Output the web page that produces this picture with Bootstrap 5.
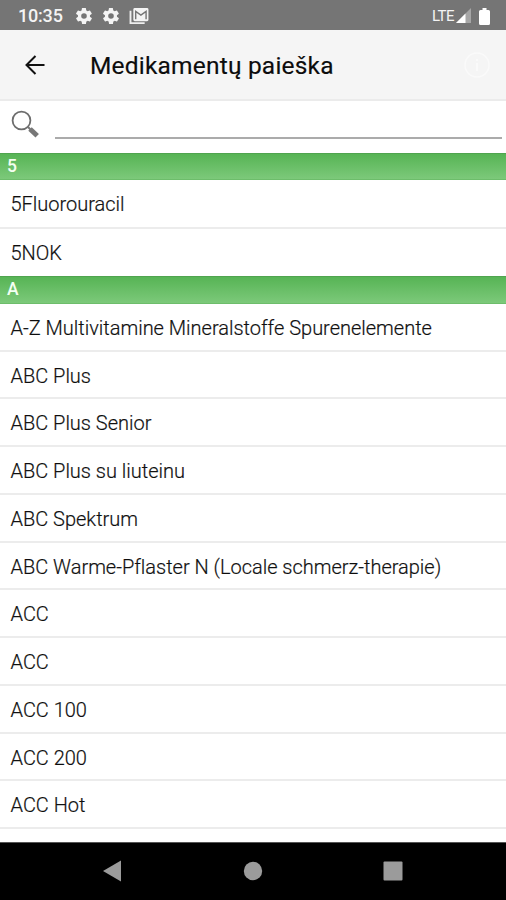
<!DOCTYPE html>
<html lang="lt">
<head>
<meta charset="utf-8">
<meta name="viewport" content="width=device-width, initial-scale=1">
<title>Medikamentų paieška</title>
<link href="https://cdn.jsdelivr.net/npm/bootstrap@5.3.0/dist/css/bootstrap.min.css" rel="stylesheet">
<style>
body{font-family:Roboto,"Noto Sans",sans-serif;color:#0c0c0c;background:#fff}
.screen{height:900px}
svg{display:block;flex:none}
.status-bar{height:30px;background:#757575;color:#f4f4f4;padding:2px 16px 0 18px}
.clock{font-size:18px;font-weight:500;width:58px;letter-spacing:-.2px;line-height:1}
.lte{font-size:15px;letter-spacing:-.5px;line-height:1;margin-right:2px}
.app-bar{height:71px;background:#f5f5f5;border-bottom:2px solid #ebebeb;padding:0 15px 0 21px}
.app-title{font-size:24.5px;font-weight:400;line-height:1;margin-left:41px;padding-top:3px;letter-spacing:.2px;-webkit-text-stroke:.15px #0c0c0c}
.search-bar{height:52px;padding:0 4px 0 10px}
.search-input{height:38px;margin-left:14px;border:0;border-bottom:2px solid #ababab;border-radius:0;padding:0;background:none}
.section-head{height:27.4px;background:linear-gradient(#57b455,#7cc97a);border-top:1px solid #50a44f;border-bottom:1px solid #6dbd6b;color:#f4fff2;font-size:17.5px;font-weight:500;line-height:25px;padding-left:7px}
.med-row{height:47.77px;font-size:20px;font-weight:300;line-height:47px;padding:1px 10.5px 0;border-bottom:2px solid #ececec;white-space:nowrap;letter-spacing:-.01px;-webkit-text-stroke:.2px #222}
.med-row.tall-row{height:48.2px}
.nav-keys{height:58px;background:#000;border-top:1px solid #555;padding:0 103px 2px 102px}
</style>
</head>
<body>
<div class="screen d-flex flex-column overflow-hidden">
  <header class="status-bar d-flex align-items-center flex-shrink-0">
    <span class="clock">10:35</span>
    <svg width="16" height="16" viewBox="2 2 20 20" fill="#f4f4f4"><path id="gear" d="M19.4 13a7.800 7.800 0 0 0 0-2l2.100-1.600a.5.5 0 0 0 .1-.7l-2-3.400a.5.5 0 0 0-.6-.2l-2.500 1a7.300 7.300 0 0 0-1.700-1l-.4-2.700a.5.5 0 0 0-.5-.4h-4a.5.5 0 0 0-.5.4L9 5.100a7.300 7.300 0 0 0-1.700 1l-2.500-1a.5.5 0 0 0-.6.200l-2 3.400a.5.5 0 0 0 .1.700L4.500 11a7.800 7.800 0 0 0 0 2l-2.100 1.600a.5.5 0 0 0-.1.700l2 3.400a.5.5 0 0 0 .6.200l2.500-1a7.300 7.300 0 0 0 1.700 1l.4 2.700a.5.5 0 0 0 .5.400h4a.5.5 0 0 0 .5-.4l.4-2.700a7.300 7.300 0 0 0 1.700-1l2.500 1a.5.5 0 0 0 .6-.2l2-3.400a.5.5 0 0 0-.1-.7zM12 15.500a3.500 3.500 0 1 1 0-7 3.500 3.500 0 0 1 0 7z"/></svg>
    <svg width="16" height="16" viewBox="2 2 20 20" fill="#f4f4f4" style="margin-left:11px"><use href="#gear"/></svg>
    <svg width="20" height="17" viewBox="0 0 20 18" style="margin-left:10px"><path d="M1 3v13h15" fill="none" stroke="#eee" stroke-width="2"/><rect x="4" y="0" width="16" height="14" rx="1.500" fill="#f4f4f4"/><path d="M6.500 12V3.500l5.500 4 5.500-4V12" fill="none" stroke="#757575" stroke-width="1.500"/></svg>
    <span class="lte ms-auto">LTE</span>
    <svg width="15" height="16" viewBox="0 0 15 16"><path d="M0 15 15 0v15z" fill="#a6a6a6"/><path d="M0 15 9.500 5.500V15z" fill="#fff"/></svg>
    <svg width="11" height="17" viewBox="0 0 11 17" fill="#fff" style="margin-left:8px"><path d="M3.500 0h4v2H9.500a1.500 1.500 0 0 1 1.500 1.500v12A1.500 1.500 0 0 1 9.500 17h-8A1.500 1.500 0 0 1 0 15.500v-12A1.500 1.500 0 0 1 1.500 2h2z"/></svg>
  </header>
  <nav class="app-bar d-flex align-items-center flex-shrink-0">
    <svg width="28" height="28" viewBox="0 0 28 28" fill="none" stroke="#111" stroke-width="2"><path d="M23.500 14H6M14.500 5 5.500 14l9 9"/></svg>
    <h1 class="app-title mb-0">Medikamentų paieška</h1>
    <svg class="ms-auto" width="28" height="28" viewBox="0 0 28 28" fill="none" stroke="#fafafa" stroke-width="1.500"><circle cx="14" cy="14" r="12"/><path d="M14 12v8M14 8v2" stroke-width="2"/></svg>
  </nav>
  <div class="search-bar d-flex flex-shrink-0">
    <svg class="mt-2" width="31" height="31" viewBox="0 0 31 31"><circle cx="11.500" cy="11.500" r="8.900" fill="#fff" stroke="#6d6d6d" stroke-width="1.800"/><path d="m18 18 3.500 3.500" stroke="#777" stroke-width="2"/><path d="m20 20 7.200 6.800" stroke="#777" stroke-width="5"/></svg>
    <input class="search-input flex-grow-1" type="text" aria-label="Paieška">
  </div>
  <main class="flex-grow-1 overflow-hidden">
    <div class="section-head">5</div>
    <div class="med-row tall-row">5Fluorouracil</div>
    <div class="med-row border-bottom-0">5NOK</div>
    <div class="section-head">A</div>
    <div class="med-row">A-Z Multivitamine Mineralstoffe Spurenelemente</div>
    <div class="med-row">ABC Plus</div>
    <div class="med-row">ABC Plus Senior</div>
    <div class="med-row">ABC Plus su liuteinu</div>
    <div class="med-row">ABC Spektrum</div>
    <div class="med-row">ABC Warme-Pflaster N (Locale schmerz-therapie)</div>
    <div class="med-row">ACC</div>
    <div class="med-row">ACC</div>
    <div class="med-row">ACC 100</div>
    <div class="med-row">ACC 200</div>
    <div class="med-row">ACC Hot</div>
  </main>
  <footer class="nav-keys d-flex align-items-center justify-content-between flex-shrink-0">
    <svg width="20" height="22" viewBox="0 0 20 22" fill="#9b9b9b"><path d="M1 11 19 .5v21z"/></svg>
    <svg width="20" height="20" viewBox="0 0 20 20" fill="#9b9b9b"><circle cx="10" cy="10" r="9.200"/></svg>
    <svg width="20" height="20" viewBox="0 0 20 20" fill="#9b9b9b"><rect x=".5" y=".5" width="19" height="19" rx="1"/></svg>
  </footer>
</div>
<script src="https://cdn.jsdelivr.net/npm/bootstrap@5.3.0/dist/js/bootstrap.bundle.min.js"></script>
</body>
</html>
